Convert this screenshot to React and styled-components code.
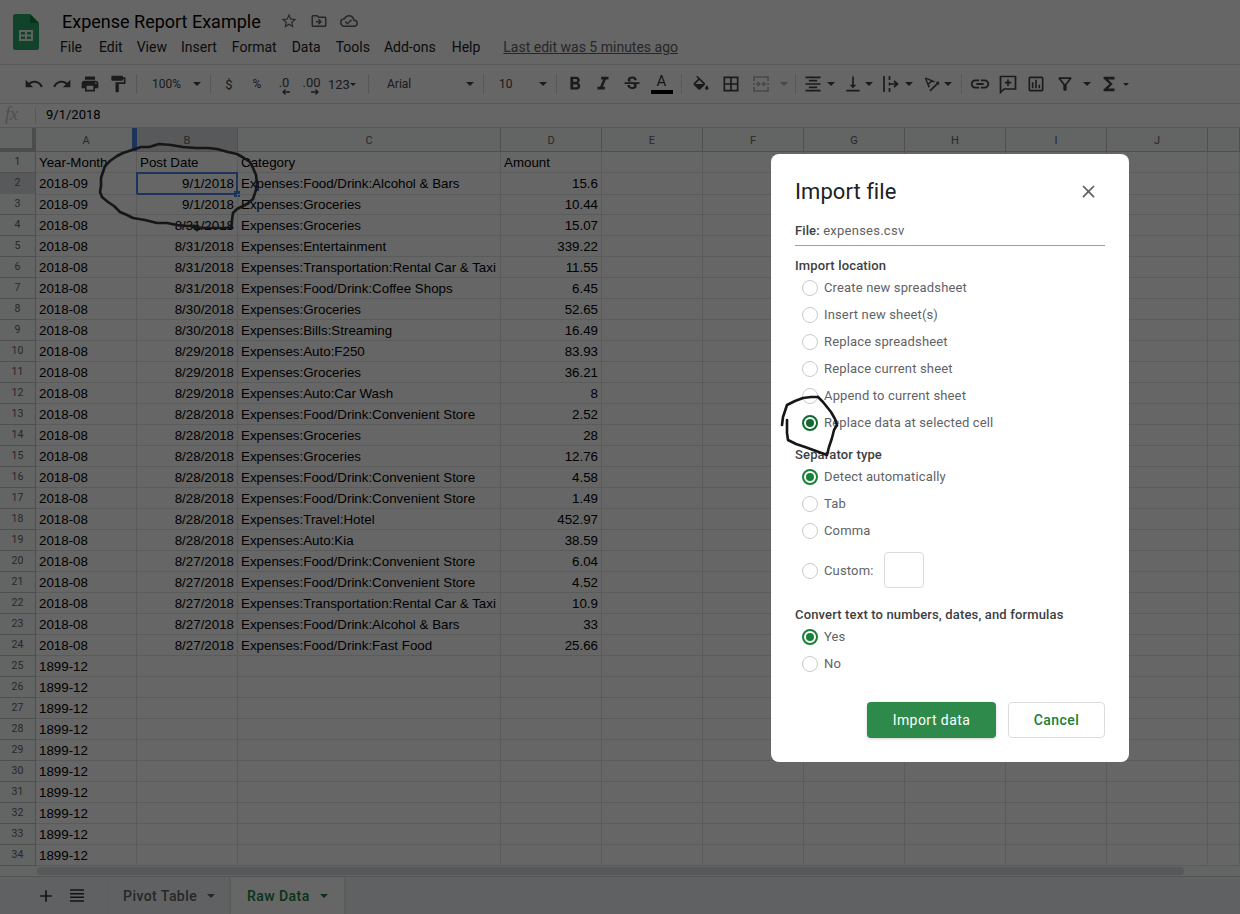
import React from 'react';
import styled, { createGlobalStyle } from 'styled-components';
import {
  MdUndo, MdRedo, MdPrint, MdFormatPaint, MdFormatBold, MdFormatItalic, MdStrikethroughS,
  MdBorderAll, MdFormatAlignCenter, MdVerticalAlignBottom,
  MdTextRotationAngleup, MdLink, MdOutlineInsertChart, MdOutlineFilterAlt,
  MdFunctions, MdStarBorder, MdOutlineDriveFileMove, MdOutlineCloudDone, MdClose, MdAdd,
} from 'react-icons/md';

const Global = createGlobalStyle`
  html, body { margin: 0; padding: 0; background: #fff; }
  * { box-sizing: border-box; }
  body { font-family: Roboto, "Liberation Sans", sans-serif; }
`;

const Page = styled.div`
  position: relative; width: 1240px; height: 914px; overflow: hidden;
  display: flex; flex-direction: column; background: #fff;
`;
const Header = styled.header`
  height: 65px; flex: none; display: flex; border-bottom: 1px solid #e0e0e0;
  padding: 14px 0 0 13px;
`;
const Logo = styled.svg` width: 26px; height: 36px; flex: none; `;
const HeadCol = styled.div` margin-left: 21px; margin-top: -5px; display: flex; flex-direction: column; `;
const TitleRow = styled.div` height: 24px; margin-left: 2px; display: flex; align-items: center; color: #000; `;
const Title = styled.div` font-size: 18px; color: #000; width: 212px; white-space: nowrap; `;
const TitleIcon = styled.span` width: 30px; display: flex; justify-content: center; color: #5f6368; font-size: 18px; `;
const MenuRow = styled.nav` height: 24px; margin-top: 2px; display: flex; align-items: center; font-size: 14px; color: #222; `;
const MenuItem = styled.span` margin-right: ${p => p.$mr}px; white-space: nowrap; `;
const LastEdit = styled.span` margin-left: 9px; font-size: 14px; color: #5f6368; text-decoration: underline; white-space: nowrap; `;

const Toolbar = styled.div`
  height: 39px; flex: none; display: flex; align-items: center; padding-left: 20px;
  border-bottom: 1px solid #dadce0; color: #444;
`;
const Tool = styled.div`
  width: ${p => p.$w}px; margin-left: ${p => p.$ml || 0}px; flex: none; height: 24px;
  display: flex; align-items: center; justify-content: ${p => p.$left ? 'flex-start' : 'center'};
  padding-left: ${p => p.$pl || 0}px;
  font-size: ${p => p.$fs || 12}px; color: ${p => p.$muted ? '#b4b6b8' : '#444'};
  position: relative;
`;
const Sep = styled.div` width: 1px; height: 20px; background: #dadce0; margin: 0 4px; flex: none; `;
const Caret = styled.span`
  width: 0; height: 0; flex: none; border-left: 4px solid transparent; border-right: 4px solid transparent;
  border-top: 4px solid ${p => p.$muted ? '#b4b6b8' : '#444'};
  margin-left: ${p => p.$auto ? 'auto' : '0'};
  margin-right: ${p => p.$auto ? '5px' : '0'};
`;
const SmallCaret = styled(Caret)` border-left-width: 3px; border-right-width: 3px; border-top-width: 3px; `;
const DecLabel = styled.span` position: relative; font-size: 13px; top: -2px; `;
const DecArrow = styled.svg`
  position: absolute; width: 8px; height: 6px; top: 14px; left: ${p => p.$left}px;
`;
const ColorA = styled.span`
  display: flex; flex-direction: column; align-items: center; font-size: 15px; line-height: 15px; width: 22px; color: #333;
  &::after { content: ''; width: 22px; height: 4px; background: #000; margin-top: 1px; }
`;
const IconSvg = styled.svg` width: 20px; height: 20px; fill: none; stroke: currentColor; stroke-width: 1.7; `;

const Formula = styled.div`
  height: 24px; flex: none; display: flex; align-items: center; border-bottom: 1px solid #dadce0;
`;
const Fx = styled.span`
  width: 36px; padding-left: 5px; font-family: "Liberation Serif", serif; font-style: italic; font-size: 18px; color: #c4c4c4;
  border-right: 1px solid #dadce0; height: 17px; line-height: 15px;
`;
const FormulaValue = styled.span` margin-left: 10px; margin-top: -2px; font-size: 13px; color: #000; `;

const Sheet = styled.div` flex: none; display: flex; flex-direction: column; `;
const Row = styled.div`
  display: grid; height: ${p => p.$h}px; grid-template-columns: 36px 101px 101px 263px 101px repeat(6, 101px) 1fr;
`;
const Corner = styled.div`
  background: #f8f9fa; border-right: 4px solid #bdbdbd; border-bottom: 4px solid #bdbdbd;
`;
const ColHead = styled.div`
  position: relative; display: flex; align-items: center; justify-content: center;
  background: ${p => p.$sel ? '#dcdfe3' : '#f8f9fa'}; border-right: 1px solid #c6c6c6; border-bottom: 1px solid #c6c6c6;
  font-size: 11px; color: #666; padding-top: 1px;
`;
const FreezeMark = styled.span` position: absolute; left: -5px; top: 0; bottom: 0; width: 5px; background: #4a86e8; `;
const RowHead = styled.div`
  display: flex; justify-content: center; padding-top: 3px;
  background: ${p => p.$sel ? '#dcdfe3' : '#f8f9fa'}; border-right: 1px solid #c6c6c6; border-bottom: 1px solid #c6c6c6;
  font-size: 10.5px; color: #666;
`;
const Cell = styled.div`
  position: relative; border-right: 1px solid #e2e3e3; border-bottom: 1px solid #e2e3e3;
  font: 13.33px/20px "Liberation Sans", Arial, sans-serif; color: #000; padding: 1px 3px 0;
  white-space: nowrap; overflow: ${p => p.$active ? 'visible' : 'hidden'};
  text-align: ${p => p.$right ? 'right' : 'left'};
  &::before {
    content: ''; display: ${p => p.$active ? 'block' : 'none'};
    position: absolute; left: -1px; top: -1px; right: -1px; bottom: -1px; border: 2px solid #4a86e8;
  }
  &::after {
    content: ''; display: ${p => p.$active ? 'block' : 'none'};
    position: absolute; right: -3px; bottom: -3px; width: 6px; height: 6px; background: #4a86e8;
  }
`;
const ScrollTrack = styled.div`
  height: 11px; flex: none; padding: 1px 0 1px 37px; background: #f8f9fa; border-bottom: 1px solid #d4d4d4;
`;
const ScrollThumb = styled.div` width: 1147px; height: 8px; border-radius: 5px; background: #dadce0; `;
const TabBar = styled.div`
  flex: 1; display: flex; background: #f1f3f4; color: #444; align-items: stretch; padding-left: 30px;
`;
const TabIcon = styled.span` width: 31px; display: flex; align-items: center; justify-content: center; font-size: 20px; color: #333; `;
const ListSvg = styled.svg` width: 14px; height: 13px; stroke: #333; stroke-width: 1.6; fill: none; `;
const Tab = styled.div`
  display: flex; align-items: center; width: ${p => p.$w}px; margin-left: ${p => p.$ml || 0}px; padding-left: ${p => p.$pl}px;
  background: ${p => p.$active ? '#fff' : '#f1f3f4'}; font-size: 14px; font-weight: 500; letter-spacing: .45px;
  color: ${p => p.$active ? '#188038' : '#5f6368'};
  box-shadow: ${p => p.$active ? '0 1px 3px rgba(60,64,67,.3)' : 'none'};
  border-left: ${p => p.$active ? 'none' : '1px solid #e8e8e8'};
`;
const TabCaret = styled.span`
  width: 0; height: 0; margin-left: 10px; border-left: 4px solid transparent; border-right: 4px solid transparent;
  border-top: 4px solid currentColor;
`;

const Scrim = styled.div` position: absolute; inset: 0; background: rgba(0,0,0,.6); `;
const Dialog = styled.section`
  position: absolute; left: 771px; top: 154px; width: 358px; height: 608px; background: #fff; border-radius: 8px;
  padding: 24px 24px 0; display: flex; flex-direction: column; color: #3c4043;
`;
const DialogHead = styled.div` display: flex; justify-content: space-between; align-items: center; height: 26px; `;
const DialogTitle = styled.h2` margin: 0; font-size: 22px; font-weight: 400; letter-spacing: .05px; color: #202124; `;
const Close = styled.span` display: flex; font-size: 21px; color: #5f6368; margin-right: 6px; `;
const FileLine = styled.div`
  margin-top: 12px; height: 30px; border-bottom: 1px solid #9aa0a6; font-size: 13px; letter-spacing: .25px; color: #5f6368; padding-top: 7px;
  b { color: #3c4043; font-weight: 500; letter-spacing: .1px; }
`;
const Section = styled.div` font-size: 13px; font-weight: 500; color: #3c4043; letter-spacing: .15px; line-height: 16px; margin-top: ${p => p.$mt}px; `;
const Radios = styled.div` display: flex; flex-direction: column; `;
const RadioRow = styled.div` height: ${p => p.$h || 27}px; display: flex; align-items: center; padding-left: 6px; font-size: 13px; letter-spacing: .15px; color: #5f6368; `;
const RadioDot = styled.span`
  --dot: ${p => p.$inked ? '#0f6a2e' : '#188038'};
  width: 16px; height: 16px; border-radius: 50%; flex: none; margin-right: 6px; margin-left: 1px;
  border: ${p => p.$on ? '2px solid var(--dot)' : '1px solid #c8cacc'};
  display: flex; align-items: center; justify-content: center;
  &::after { content: ''; display: ${p => p.$on ? 'block' : 'none'}; width: 8px; height: 8px; border-radius: 50%; background: var(--dot); }
`;
const CustomBox = styled.span` width: 40px; height: 36px; margin-left: 11px; margin-top: -1px; border: 1px solid #dadce0; border-radius: 4px; `;
const Actions = styled.div` display: flex; justify-content: flex-end; gap: 12px; margin-top: 25px; `;
const Button = styled.div`
  height: 36px; width: ${p => p.$w}px; border-radius: 4px; display: flex; align-items: center; justify-content: center;
  font-size: 14px; font-weight: ${p => p.$primary ? 400 : 500}; letter-spacing: .45px;
  background: ${p => p.$primary ? '#2d8a4b' : '#fff'}; color: ${p => p.$primary ? '#fff' : '#188038'};
  border: ${p => p.$primary ? 'none' : '1px solid #dadce0'};
  box-shadow: ${p => p.$primary ? '0 1px 3px rgba(60,64,67,.25)' : 'none'};
`;
const Ink = styled.svg` position: absolute; left: 0; top: 0; width: 1240px; height: 914px; pointer-events: none; `;

const menu = [['File', 17], ['Edit', 14], ['View', 14], ['Insert', 15], ['Format', 15], ['Data', 15], ['Tools', 14], ['Add-ons', 16], ['Help', 14]];

const data = [
  ['Year-Month', 'Post Date', 'Category', 'Amount'],
  ['2018-09', '9/1/2018', 'Expenses:Food/Drink:Alcohol & Bars', '15.6'],
  ['2018-09', '9/1/2018', 'Expenses:Groceries', '10.44'],
  ['2018-08', '8/31/2018', 'Expenses:Groceries', '15.07'],
  ['2018-08', '8/31/2018', 'Expenses:Entertainment', '339.22'],
  ['2018-08', '8/31/2018', 'Expenses:Transportation:Rental Car & Taxi', '11.55'],
  ['2018-08', '8/31/2018', 'Expenses:Food/Drink:Coffee Shops', '6.45'],
  ['2018-08', '8/30/2018', 'Expenses:Groceries', '52.65'],
  ['2018-08', '8/30/2018', 'Expenses:Bills:Streaming', '16.49'],
  ['2018-08', '8/29/2018', 'Expenses:Auto:F250', '83.93'],
  ['2018-08', '8/29/2018', 'Expenses:Groceries', '36.21'],
  ['2018-08', '8/29/2018', 'Expenses:Auto:Car Wash', '8'],
  ['2018-08', '8/28/2018', 'Expenses:Food/Drink:Convenient Store', '2.52'],
  ['2018-08', '8/28/2018', 'Expenses:Groceries', '28'],
  ['2018-08', '8/28/2018', 'Expenses:Groceries', '12.76'],
  ['2018-08', '8/28/2018', 'Expenses:Food/Drink:Convenient Store', '4.58'],
  ['2018-08', '8/28/2018', 'Expenses:Food/Drink:Convenient Store', '1.49'],
  ['2018-08', '8/28/2018', 'Expenses:Travel:Hotel', '452.97'],
  ['2018-08', '8/28/2018', 'Expenses:Auto:Kia', '38.59'],
  ['2018-08', '8/27/2018', 'Expenses:Food/Drink:Convenient Store', '6.04'],
  ['2018-08', '8/27/2018', 'Expenses:Food/Drink:Convenient Store', '4.52'],
  ['2018-08', '8/27/2018', 'Expenses:Transportation:Rental Car & Taxi', '10.9'],
  ['2018-08', '8/27/2018', 'Expenses:Food/Drink:Alcohol & Bars', '33'],
  ['2018-08', '8/27/2018', 'Expenses:Food/Drink:Fast Food', '25.66'],
];
for (let i = 0; i < 10; i++) data.push(['1899-12', '', '', '']);

const cols = ['A', 'B', 'C', 'D', 'E', 'F', 'G', 'H', 'I', 'J', ''];

const MergeIcon = () => (
  <IconSvg viewBox="0 0 20 20">
    <path d="M3 7V3h14v4M3 13v4h14v-4M3 9v2M17 9v2" />
    <path d="M5 10h3M6.500 8l2 2-2 2M15 10h-3M13.500 8l-2 2 2 2" />
  </IconSvg>
);
const WrapIcon = () => (
  <IconSvg viewBox="0 0 20 20">
    <path d="M3 2v16M8.500 2v4M8.500 8.500v3M8.500 14v4M8 10h8M13 7l3.500 3-3.500 3" />
  </IconSvg>
);
const FillIcon = () => (
  <svg width="20" height="20" viewBox="0 0 24 24" fill="currentColor">
    <path d="M16.560 10.940L7.620 2 6.210 3.410l2.380 2.380-5.150 5.150c-.59.59-.59 1.540 0 2.120l5.500 5.500c.29.29.68.44 1.060.44s.77-.15 1.060-.44l5.500-5.500c.59-.58.59-1.530 0-2.120zM5.210 12L10 7.210 14.790 12H5.210zM19 13.500s-2 2.170-2 3.500c0 1.100.9 2 2 2s2-.9 2-2c0-1.330-2-3.500-2-3.500z" />
  </svg>
);
const CommentIcon = () => (
  <IconSvg viewBox="0 0 20 20">
    <path d="M2.500 2.500h15v12.500H6l-3.500 3.500z" />
    <path d="M10 5.500v6.500M6.800 8.700h6.500" />
  </IconSvg>
);
const LeftArrow = () => (
  <DecArrow $left={3} viewBox="0 0 8 6" fill="none" stroke="currentColor" strokeWidth="1.300"><path d="M8 3H1M3.500 .5L1 3l2.500 2.500" /></DecArrow>
);
const RightArrow = () => (
  <DecArrow $left={9} viewBox="0 0 8 6" fill="none" stroke="currentColor" strokeWidth="1.300"><path d="M0 3h7M4.500 .5L7 3 4.500 5.500" /></DecArrow>
);

const Radio = ({ on, inked, label, h, children }) => (
  <RadioRow $h={h}><RadioDot $on={on} $inked={inked} />{label}{children}</RadioRow>
);

export default function App() {
  return (
    <Page>
      <Global />
      <Header>
        <Logo viewBox="0 0 26 36" aria-hidden="true">
          <path d="M2.500 0H17l9 9v24.500a2.500 2.500 0 0 1-2.500 2.500h-21A2.500 2.500 0 0 1 0 33.500v-31A2.500 2.500 0 0 1 2.500 0z" fill="#2aa866" />
          <path d="M17 0l9 9h-7a2 2 0 0 1-2-2z" fill="#188038" />
          <path d="M6 16h14v11H6z M8 18v2.500h4V18z M14 18v2.500h4V18z M8 22.500V25h4v-2.500z M14 22.500V25h4v-2.500z" fill="#f1f3f4" fillRule="evenodd" />
        </Logo>
        <HeadCol>
          <TitleRow>
            <Title>Expense Report Example</Title>
            <TitleIcon><MdStarBorder /></TitleIcon>
            <TitleIcon><MdOutlineDriveFileMove /></TitleIcon>
            <TitleIcon><MdOutlineCloudDone /></TitleIcon>
          </TitleRow>
          <MenuRow>
            {menu.map(([m, r]) => <MenuItem key={m} $mr={r}>{m}</MenuItem>)}
            <LastEdit>Last edit was 5 minutes ago</LastEdit>
          </MenuRow>
        </HeadCol>
      </Header>

      <Toolbar>
        <Tool $w={28} $fs={20}><MdUndo /></Tool>
        <Tool $w={28} $fs={20}><MdRedo /></Tool>
        <Tool $w={28} $fs={20}><MdPrint /></Tool>
        <Tool $w={28} $fs={20}><MdFormatPaint /></Tool>
        <Sep />
        <Tool $w={65} $left $pl={11}>100%<Caret $auto /></Tool>
        <Sep />
        <Tool $w={28} $fs={13}>$</Tool>
        <Tool $w={28} $fs={12}>%</Tool>
        <Tool $w={26}><DecLabel>.0<LeftArrow /></DecLabel></Tool>
        <Tool $w={29}><DecLabel>.00<RightArrow /></DecLabel></Tool>
        <Tool $w={38} $left $pl={2} $fs={13}>123<SmallCaret /></Tool>
        <Sep />
        <Tool $w={106} $left $pl={14}>Arial<Caret $auto /></Tool>
        <Sep />
        <Tool $w={64} $left $pl={11}>10<Caret $auto /></Tool>
        <Sep />
        <Tool $w={28} $fs={22}><MdFormatBold /></Tool>
        <Tool $w={28} $fs={22}><MdFormatItalic /></Tool>
        <Tool $w={29} $fs={20}><MdStrikethroughS /></Tool>
        <Tool $w={31}><ColorA>A</ColorA></Tool>
        <Sep />
        <Tool $w={30}><FillIcon /></Tool>
        <Tool $w={30} $fs={20}><MdBorderAll /></Tool>
        <Tool $w={30} $muted><MergeIcon /></Tool>
        <Tool $w={15}><Caret $muted /></Tool>
        <Sep />
        <Tool $w={26} $fs={20}><MdFormatAlignCenter /></Tool>
        <Tool $w={10}><Caret /></Tool>
        <Tool $w={26} $ml={4} $fs={20}><MdVerticalAlignBottom /></Tool>
        <Tool $w={6}><Caret /></Tool>
        <Tool $w={26} $ml={6}><WrapIcon /></Tool>
        <Tool $w={10}><Caret /></Tool>
        <Tool $w={26} $ml={5} $fs={20}><MdTextRotationAngleup /></Tool>
        <Tool $w={6}><Caret /></Tool>
        <Tool $w={6} />
        <Sep />
        <Tool $w={28} $fs={22}><MdLink /></Tool>
        <Tool $w={28}><CommentIcon /></Tool>
        <Tool $w={28} $fs={20}><MdOutlineInsertChart /></Tool>
        <Tool $w={28} $ml={1} $fs={20}><MdOutlineFilterAlt /></Tool>
        <Tool $w={12} $ml={2}><Caret /></Tool>
        <Tool $w={28} $ml={2} $fs={22}><MdFunctions /></Tool>
        <Tool $w={6}><SmallCaret /></Tool>
      </Toolbar>

      <Formula>
        <Fx>fx</Fx>
        <FormulaValue>9/1/2018</FormulaValue>
      </Formula>

      <Sheet>
        <Row $h={24}>
          <Corner />
          {cols.map((c, i) => (
            <ColHead key={i} $sel={c === 'B'}>{c}{c === 'B' && <FreezeMark />}</ColHead>
          ))}
        </Row>
        {data.map((r, i) => (
          <Row key={i} $h={21}>
            <RowHead $sel={i === 1}>{i + 1}</RowHead>
            <Cell>{r[0]}</Cell>
            <Cell $right={i > 0} $active={i === 1}>{r[1]}</Cell>
            <Cell>{r[2]}</Cell>
            <Cell $right={i > 0}>{r[3]}</Cell>
            {[0, 1, 2, 3, 4, 5, 6].map(k => <Cell key={k} />)}
          </Row>
        ))}
        <ScrollTrack><ScrollThumb /></ScrollTrack>
      </Sheet>

      <TabBar>
        <TabIcon><MdAdd /></TabIcon>
        <TabIcon>
          <ListSvg viewBox="0 0 14 13"><path d="M0 1h14M0 4.700h14M0 8.300h14M0 12h14" /></ListSvg>
        </TabIcon>
        <Tab $w={124} $ml={15} $pl={15}>Pivot Table<TabCaret /></Tab>
        <Tab $w={113} $pl={16} $active>Raw Data<TabCaret /></Tab>
      </TabBar>

      <Scrim />

      <Dialog>
        <DialogHead>
          <DialogTitle>Import file</DialogTitle>
          <Close><MdClose /></Close>
        </DialogHead>
        <FileLine><b>File:</b> expenses.csv</FileLine>
        <Section $mt={12}>Import location</Section>
        <Radios>
          <Radio label="Create new spreadsheet" />
          <Radio label="Insert new sheet(s)" />
          <Radio label="Replace spreadsheet" />
          <Radio label="Replace current sheet" />
          <Radio label="Append to current sheet" />
          <Radio on inked label="Replace data at selected cell" />
        </Radios>
        <Section $mt={11}>Separator type</Section>
        <Radios>
          <Radio on label="Detect automatically" />
          <Radio label="Tab" />
          <Radio label="Comma" />
          <Radio h={53} label="Custom:"><CustomBox /></Radio>
        </Radios>
        <Section $mt={10}>Convert text to numbers, dates, and formulas</Section>
        <Radios>
          <Radio on label="Yes" />
          <Radio label="No" />
        </Radios>
        <Actions>
          <Button $primary $w={129}>Import data</Button>
          <Button $w={97}>Cancel</Button>
        </Actions>
      </Dialog>

      <Ink viewBox="0 0 1240 914" fill="none" stroke="#161616" strokeWidth="2.600" strokeLinejoin="round" strokeLinecap="round">
        <path d="M197 230l-2-4-8 0-10-1-10-2-10 0-12-3-12-2-6-3-7-3-6-6-6-4-6-5-2-5 1-6 0-8 2-6 2-6 5-5 7-5 6-3 9-3 9-3 8 0 10-3 12 1 12 2 13 1 12 0 9 1 11 3 9 2 7 4 6 4 3 6 3 7 1 8-1 7-3 9-6 5-6 3-4 2-4 4-1 7-1 8-2 0-8 0-8 0-10 0-10-1" />
        <path d="M197 230l-4-4 5 0" />
        <path d="M818 397L811 397 803 398 795 401 787 405 785 411 783 417 782 425" />
        <path d="M787 420L787 433 788 440 796 444 805 447 816 451 827 455 829 447 832 438 834 430 837 425 835 419 831 412 827 407 823 402 818 397" />
      </Ink>
    </Page>
  );
}
